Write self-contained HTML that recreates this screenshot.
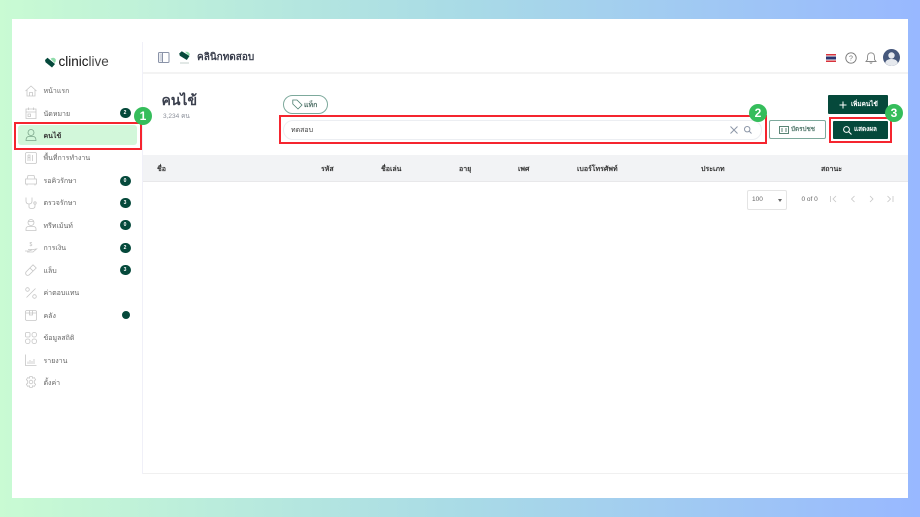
<!DOCTYPE html>
<html><head><meta charset="utf-8"><style>
html,body{margin:0;padding:0}
body{width:920px;height:517px;overflow:hidden;position:relative;background:linear-gradient(90deg,#c9fbd3 0%,#a9dbe6 50%,#98b8ff 100%);font-family:"Liberation Sans","Noto Sans CJK SC",sans-serif}
#w{position:absolute;left:0;top:0;width:920px;height:517px;filter:blur(.3px)}
.a{position:absolute}
.t{position:absolute;font-family:"Liberation Sans","Noto Sans CJK SC",sans-serif;white-space:nowrap;line-height:1}
.m{font-size:7px;color:#666;left:43.5px}
.b{position:absolute;left:119.5px;width:11px;height:10px;border-radius:5px;background:#05493b;color:#fff;font-size:5px;font-weight:bold;text-align:center;line-height:10px}
.h{font-size:7px;font-weight:bold;color:#333;top:166px}
.r{position:absolute;border:2px solid #f5252f;box-sizing:border-box}
.c{position:absolute;width:18px;height:18px;border-radius:50%;background:#35bd5b;color:#fff;font-weight:bold;font-size:12px;text-align:center;line-height:18px}
svg{position:absolute;overflow:visible}
.i{fill:none;stroke:#c6c6c6;stroke-width:.8}
</style></head><body>
<div id="w">
<div class="a" style="left:12px;top:19px;width:896px;height:479px;background:#fff"></div>
<div class="a" style="left:142px;top:42px;width:1px;height:432px;background:#f0f0f8"></div>
<div class="a" style="left:143px;top:72px;width:765px;height:2px;background:#f3f3f3"></div>
<div class="a" style="left:143px;top:473px;width:765px;height:1px;background:#f0f0f0"></div>
<div class="a" style="left:143px;top:155px;width:765px;height:27px;background:#f2f3f5;border-bottom:1px solid #e8e8ea;box-sizing:border-box"></div>

<!-- logo -->
<svg style="left:45px;top:57px" width="11" height="11" viewBox="0 0 11 11"><path d="M0 3 L2.5 .8 L10 7 L7 10.5 L.5 5.2Z" fill="#05493b"/><path d="M5.5 1.8 Q8.8 -.5 10.8 2.5 Q11 4.5 9.8 6Z" fill="#8fdcaa"/></svg>
<div class="t" style="left:58.5px;top:55px;font-size:13.5px;color:#111">clinic<span style="color:#444">live</span></div>

<!-- sidebar -->
<div class="a" style="left:18px;top:125px;width:119px;height:20px;background:#d2f7da;border-radius:3px"></div>
<div class="r" style="left:14px;top:122px;width:128px;height:28px"></div>

<svg style="left:25px;top:85px" width="12" height="12"><path class="i" d="M0.5 6 L6 1 L11.5 6 M2 5 V11 H10 V5 M4.5 11 V7.5 H7.5 V11"/></svg>
<svg style="left:25px;top:107px" width="12" height="12"><path class="i" d="M1 2 H11 V11.5 H1Z M1 5 H11 M3.5 .5 V3 M8.5 .5 V3 M3 7 H5.5 V9.5 H3Z"/></svg>
<svg style="left:25px;top:129px" width="12" height="12"><circle class="i" style="stroke:#7ba58a" cx="6" cy="3.5" r="3"/><path class="i" style="stroke:#7ba58a" d="M1 11.5 Q1 7.5 4 7.5 H8 Q11 7.5 11 11.5Z"/></svg>
<svg style="left:25px;top:152px" width="12" height="12"><rect class="i" x=".5" y=".5" width="11" height="11" rx="1.5"/><path class="i" d="M3 3 H5 V9 M3 3 V9 M7.5 3 V9 M3 5.5 H5"/></svg>
<svg style="left:25px;top:174px" width="12" height="12"><path class="i" d="M2 5 L3 1.5 H9 L10 5 M.5 5 H11.5 V10 H.5Z M2 10 V11.5 M10 10 V11.5"/></svg>
<svg style="left:25px;top:197px" width="12" height="12"><path class="i" d="M1 .5 V4 Q1 7 4 7 Q7 7 7 4 V.5 M4 7 V10 Q4 11.5 7 11.5 Q10 11.5 10 9 V7"/><circle class="i" cx="10" cy="6" r="1.2"/></svg>
<svg style="left:25px;top:219px" width="12" height="12"><circle class="i" cx="6" cy="3.5" r="3"/><path class="i" d="M3 2.5 H9 M1 11.5 V10 Q1 7.5 4 7.5 H8 Q11 7.5 11 10 V11.5Z"/></svg>
<svg style="left:25px;top:241px" width="12" height="12"><path class="i" d="M0 10 H4 L8 8.5 L11.5 8 L8 11 H2 M3 8.5 H7"/><text x="4.5" y="5" font-size="5" fill="#bbb" font-family="Liberation Sans">$</text></svg>
<svg style="left:25px;top:264px" width="12" height="12"><path class="i" d="M8 .8 L11.2 4 L4 11 Q2.5 11.8 1.2 10.8 Q.2 9.5 1 8Z M5 4 L8 7"/></svg>
<svg style="left:25px;top:287px" width="12" height="12"><path class="i" d="M1.5 10.5 L10.5 1.5"/><circle class="i" cx="2.5" cy="2.5" r="1.8"/><circle class="i" cx="9.5" cy="9.5" r="1.8"/></svg>
<svg style="left:25px;top:309px" width="12" height="12"><rect class="i" x=".5" y="1.5" width="11" height="10" rx="1.5"/><path class="i" d="M.5 4 H11.5 M4.5 1.5 V6 H7.5 V1.5"/></svg>
<svg style="left:25px;top:332px" width="12" height="12"><rect class="i" x=".5" y=".5" width="4.5" height="4.5" rx="1"/><rect class="i" x="7" y=".5" width="4.5" height="4.5" rx="2"/><rect class="i" x=".5" y="7" width="4.5" height="4.5" rx="2"/><rect class="i" x="7" y="7" width="4.5" height="4.5" rx="2"/></svg>
<svg style="left:25px;top:354px" width="12" height="12"><path class="i" d="M.5 .5 V11.5 H11.5 M3 10 V7.5 M5 10 V6 M7 10 V7 M9 10 V5"/></svg>
<svg style="left:25px;top:376px" width="12" height="12"><path class="i" d="M4.8.5 H7.2 L7.6 2.2 L9.3 1.6 L10.6 3.7 L9.3 4.9 V7.1 L10.6 8.3 L9.3 10.4 L7.6 9.8 L7.2 11.5 H4.8 L4.4 9.8 L2.7 10.4 L1.4 8.3 L2.7 7.1 V4.9 L1.4 3.7 L2.7 1.6 L4.4 2.2Z"/><circle class="i" cx="6" cy="6" r="1.8"/></svg>

<div class="t m" style="top:88px">หน้าแรก</div>
<div class="t m" style="top:110.5px">นัดหมาย</div>
<div class="t m" style="top:132.5px;color:#333;font-weight:bold">คนไข้</div>
<div class="t m" style="top:155px">พื้นที่การทำงาน</div>
<div class="t m" style="top:177.5px">รอคิวรักษา</div>
<div class="t m" style="top:200px">ตรวจรักษา</div>
<div class="t m" style="top:222.5px">ทรีทเม้นท์</div>
<div class="t m" style="top:245px">การเงิน</div>
<div class="t m" style="top:267.5px">แล็บ</div>
<div class="t m" style="top:290px">ค่าตอบแทน</div>
<div class="t m" style="top:312.5px">คลัง</div>
<div class="t m" style="top:335px">ข้อมูลสถิติ</div>
<div class="t m" style="top:357.5px">รายงาน</div>
<div class="t m" style="top:379.5px">ตั้งค่า</div>

<div class="b" style="top:108px">2</div>
<div class="b" style="top:175.5px">0</div>
<div class="b" style="top:198px">3</div>
<div class="b" style="top:220px">0</div>
<div class="b" style="top:242.5px">2</div>
<div class="b" style="top:265px">3</div>
<div class="a" style="left:122px;top:311px;width:8px;height:8px;border-radius:50%;background:#05493b"></div>
<div class="c" style="left:134px;top:107px">1</div>

<!-- top bar -->
<svg style="left:158px;top:52px" width="12" height="12"><rect x=".5" y=".5" width="10.5" height="10" rx="1" fill="none" stroke="#8a93a8"/><path d="M4.5 .5 V10.5" stroke="#8a93a8"/><rect x="1.5" y="1.5" width="2.5" height="8" fill="#d5d9e2"/></svg>
<svg style="left:179px;top:51px" width="12" height="13"><path d="M.2 2.5 L2.8 .2 L10.5 5 L7.8 9 L.8 4.8Z" fill="#05493b"/><path d="M6 .8 Q10 .2 11 3.5 L9.8 4.8Z" fill="#8fdcaa"/><path d="M1 12 H10" stroke="#c5d2cc" stroke-width="1"/></svg>
<div class="t" style="left:197px;top:53px;font-size:10px;font-weight:bold;color:#3a3f4d">คลินิกทดสอบ</div>

<div class="a" style="left:826px;top:54px;width:10px;height:8px;background:linear-gradient(#d8323c 0 17%,#f4f4f4 17% 33%,#2a3470 33% 67%,#f4f4f4 67% 83%,#d8323c 83%)"></div>
<svg style="left:845px;top:52px" width="12" height="12"><circle cx="6" cy="6" r="5.2" fill="none" stroke="#777" stroke-width=".9"/><text x="6" y="8.5" font-size="7" text-anchor="middle" fill="#777" font-family="Liberation Sans">?</text></svg>
<svg style="left:865px;top:52px" width="12" height="12"><path d="M6 .8 Q9.5 1 9.5 5 V7.5 L11 9.5 H1 L2.5 7.5 V5 Q2.5 1 6 .8Z M4.8 10.5 Q6 12 7.2 10.5" fill="none" stroke="#888" stroke-width=".9"/></svg>
<svg style="left:883px;top:49px" width="17" height="17"><circle cx="8.5" cy="8.5" r="8.5" fill="#46587c"/><circle cx="8.5" cy="6.5" r="3.2" fill="#e6e9ee"/><path d="M2.2 14 Q3 10 8.5 10 Q14 10 14.8 14 Q12 17 8.5 17 Q5 17 2.2 14Z" fill="#e6e9ee"/></svg>

<!-- page head -->
<div class="t" style="left:161.5px;top:93px;font-size:14px;font-weight:bold;color:#3a3f4d">คนไข้</div>
<div class="t" style="left:163px;top:113.5px;font-size:6.5px;color:#8a8f99">3,234 คน</div>

<div class="a" style="left:283px;top:95px;width:45px;height:19px;border:1px solid #7da99c;border-radius:10px;box-sizing:border-box"></div>
<svg style="left:292px;top:99px" width="11" height="11"><path d="M.8 1 H5 L10 6 L6 10 L.8 5Z" fill="none" stroke="#4a7d6e" stroke-width=".8"/></svg>
<div class="t" style="left:304px;top:101.5px;font-size:7px;font-weight:bold;color:#4d6e65">แท็ก</div>

<div class="r" style="left:279px;top:115px;width:488px;height:29px"></div>
<div class="a" style="left:283px;top:120px;width:479px;height:20px;border:1px solid #eceef2;border-radius:10px;box-sizing:border-box"></div>
<div class="t" style="left:291px;top:127px;font-size:7px;color:#444">ทดสอบ</div>
<svg style="left:730px;top:126px" width="8" height="8"><path d="M.5 .5 L7.5 7.5 M7.5 .5 L.5 7.5" stroke="#8d97a8" stroke-width="1"/></svg>
<svg style="left:744px;top:126px" width="8" height="8"><circle cx="3.2" cy="3.2" r="2.7" fill="none" stroke="#8d97a8"/><path d="M5.2 5.2 L7.5 7.5" stroke="#8d97a8"/></svg>
<div class="c" style="left:749px;top:104px">2</div>

<div class="a" style="left:769px;top:120px;width:57px;height:19px;border:1px solid #7da99c;border-radius:2px;box-sizing:border-box"></div>
<svg style="left:779px;top:126px" width="10" height="8"><rect x=".5" y=".5" width="9" height="7" fill="none" stroke="#5b8576"/><path d="M3 2 V6 M7 2 V6" stroke="#5b8576"/></svg>
<div class="t" style="left:791px;top:127px;font-size:6.3px;font-weight:bold;color:#557a6e">บัตรปชช</div>

<div class="a" style="left:828px;top:95px;width:60px;height:19px;background:#05493b;border-radius:1px"></div>
<svg style="left:839px;top:101px" width="8" height="8"><path d="M4 .5 V7.5 M.5 4 H7.5" stroke="#fff" stroke-width="1"/></svg>
<div class="t" style="left:851px;top:101.5px;font-size:6.4px;font-weight:bold;color:#fff">เพิ่มคนไข้</div>

<div class="r" style="left:829px;top:117px;width:63px;height:26px"></div>
<div class="a" style="left:833px;top:121px;width:55px;height:18px;background:#05493b;border-radius:1px"></div>
<svg style="left:843px;top:126px" width="9" height="9"><circle cx="3.5" cy="3.5" r="2.9" fill="none" stroke="#fff"/><path d="M5.6 5.6 L8.5 8.5" stroke="#fff" stroke-width="1.1"/></svg>
<div class="t" style="left:854px;top:127px;font-size:6.4px;font-weight:bold;color:#fff">แสดงผล</div>
<div class="c" style="left:885px;top:104px">3</div>

<!-- table head -->
<div class="t h" style="left:157px">ชื่อ</div>
<div class="t h" style="left:321px">รหัส</div>
<div class="t h" style="left:381px">ชื่อเล่น</div>
<div class="t h" style="left:459px">อายุ</div>
<div class="t h" style="left:518px">เพศ</div>
<div class="t h" style="left:577px">เบอร์โทรศัพท์</div>
<div class="t h" style="left:701px">ประเภท</div>
<div class="t h" style="left:821px">สถานะ</div>

<!-- pagination -->
<div class="a" style="left:747px;top:190px;width:40px;height:20px;border:1px solid #e4e4e4;border-radius:2px;box-sizing:border-box"></div>
<div class="t" style="left:752px;top:196.5px;font-size:6.5px;color:#666">100</div>
<div class="a" style="left:778px;top:199px;border-left:2.5px solid transparent;border-right:2.5px solid transparent;border-top:3px solid #666"></div>
<div class="t" style="left:801.5px;top:196.5px;font-size:6.5px;color:#666">0 of 0</div>
<svg style="left:830px;top:195px" width="66" height="8" fill="none" stroke="#c6c6c6" stroke-width=".8"><path d="M.5 1 V7 M6 1 L3 4 L6 7"/><path d="M24.5 1 L21.5 4 L24.5 7"/><path d="M40 1 L43 4 L40 7"/><path d="M57.5 1 L60.5 4 L57.5 7 M63 1 V7"/></svg>
</div>
</body></html>
